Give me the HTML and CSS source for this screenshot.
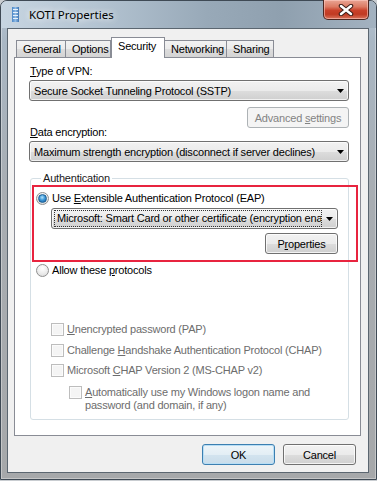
FILE: index.html
```html
<!DOCTYPE html>
<html>
<head>
<meta charset="utf-8">
<link rel="stylesheet" href="styles.css">
</head>
<body>
<div class="window">
  <div class="titlebar">
    <svg class="appicon" width="7" height="15" viewBox="0 0 7 15">
      <defs>
        <linearGradient id="ig" x1="0" y1="0" x2="1" y2="0">
          <stop offset="0" stop-color="#4b86c6"/>
          <stop offset="0.5" stop-color="#8fbbe6"/>
          <stop offset="1" stop-color="#3c72b0"/>
        </linearGradient>
      </defs>
      <rect x="0" y="0" width="7" height="15" fill="url(#ig)"/>
      <rect x="1" y="2" width="5" height="1" fill="#e6f0fa"/>
      <rect x="1" y="5" width="5" height="1" fill="#e6f0fa"/>
      <rect x="1" y="8" width="5" height="1" fill="#e6f0fa"/>
      <rect x="1" y="11" width="5" height="1" fill="#e6f0fa"/>
    </svg>
    <span class="title">KOTI Properties</span>
    <div class="close">
      <svg width="16" height="12" viewBox="0 0 16 12">
        <path d="M3 2 L13 10 M13 2 L3 10" stroke="#3b1d18" stroke-width="4.5" stroke-linecap="round"/>
        <path d="M3 2 L13 10 M13 2 L3 10" stroke="#ffffff" stroke-width="2.5" stroke-linecap="round"/>
      </svg>
    </div>
  </div>
  <div class="client">
    <div class="tabs">
      <div class="tab t-general">General</div>
      <div class="tab t-options">Options</div>
      <div class="tab active t-security">Security</div>
      <div class="tab t-networking">Networking</div>
      <div class="tab t-sharing">Sharing</div>
    </div>
    <div class="panel">
      <div class="label"><u>T</u>ype of VPN:</div>
      <div class="combo first">
        <span class="ctext">Secure Socket Tunneling Protocol (SSTP)</span>
        <svg class="arrow" width="7" height="4" viewBox="0 0 7 4"><polygon points="0,0 7,0 3.5,4" fill="#000"/></svg>
      </div>
      <div class="row-adv">
        <div class="label enc"><u>D</u>ata encryption:</div>
        <div class="button disabled adv"><span>Advanced <u>s</u>ettings</span></div>
      </div>
      <div class="combo second">
        <span class="ctext">Maximum strength encryption (disconnect if server declines)</span>
        <svg class="arrow" width="7" height="4" viewBox="0 0 7 4"><polygon points="0,0 7,0 3.5,4" fill="#000"/></svg>
      </div>
      <fieldset class="group">
        <legend>Authentication</legend>
        <div class="eap">
          <div class="optrow">
            <span class="radio on"></span>
            <span>Use <u>E</u>xtensible Authentication Protocol (EAP)</span>
          </div>
          <div class="combo focus">
            <span class="focusrect">Microsoft: Smart Card or other certificate (encryption ena</span>
            <svg class="arrow" width="7" height="4" viewBox="0 0 7 4"><polygon points="0,0 7,0 3.5,4" fill="#000"/></svg>
          </div>
          <div class="button props"><span>P<u>r</u>operties</span></div>
        </div>
        <div class="optrow allow">
          <span class="radio"></span>
          <span>Allow these <u>p</u>rotocols</span>
        </div>
        <div class="check c-pap"><span class="box"></span><span><u>U</u>nencrypted password (PAP)</span></div>
        <div class="check c-chap">
          <span class="box"></span><span>Challenge <u>H</u>andshake Authentication Protocol (CHAP)</span>
        </div>
        <div class="check c-ms"><span class="box"></span><span>Microsoft <u>C</u>HAP Version 2 (MS-CHAP v2)</span></div>
        <div class="check c-auto">
          <span class="box"></span>
          <span><u>A</u>utomatically use my Windows logon name and<br>password (and domain, if any)</span>
        </div>
      </fieldset>
    </div>
    <div class="footer">
      <div class="button default"><span>OK</span></div>
      <div class="button"><span>Cancel</span></div>
    </div>
  </div>
</div>
</body>
</html>
```
FILE: styles.css
```css
* { box-sizing: border-box; }
html, body { margin: 0; padding: 0; }
body {
  width: 377px;
  height: 481px;
  overflow: hidden;
  background: #c9cdd1;
  font-family: "Liberation Sans", Arial, sans-serif;
  font-size: 11px;
  letter-spacing: -0.2px;
  color: #000;
}
u { text-decoration: underline; text-underline-offset: 1px; }

.window {
  width: 377px;
  height: 480px;
  border: 1px solid #3f4a55;
  border-radius: 7px 7px 0 0;
  background: linear-gradient(180deg, #b6c5d3 0px, #a9b7c4 40px, #a8adb2 200px, #a6a8aa 480px);
  display: flex;
  flex-direction: column;
  box-shadow: inset 0 0 0 1px rgba(255,255,255,0.35);
}

.titlebar {
  height: 27px;
  display: flex;
  align-items: center;
  background: linear-gradient(90deg, #c7d5e1 0%, #b4c4d2 25%, #98a9b8 55%, #8fa0af 75%, #a3b2c0 100%);
  border-radius: 6px 6px 0 0;
}
.appicon { margin-left: 11px; flex: none; }
.title {
  margin-left: 10px;
  font-family: "Noto Sans", "Open Sans", sans-serif;
  font-size: 11.5px;
  letter-spacing: 0;
  color: #000;
  text-shadow: 0 0 6px rgba(255,255,255,0.9), 0 0 10px rgba(255,255,255,0.6);
}
.close {
  margin-left: auto;
  margin-right: 7px;
  align-self: flex-start;
  margin-top: -1px;
  width: 46px;
  height: 20px;
  border: 1px solid #4d2620;
  border-top: none;
  border-radius: 0 0 5px 5px;
  background: linear-gradient(180deg, #e9a595 0%, #dc7b64 35%, #c9412a 55%, #c03a22 75%, #d9745d 100%);
  box-shadow: inset 0 0 0 1px rgba(255,210,200,0.55);
  display: flex;
  align-items: center;
  justify-content: center;
}

.client {
  margin: 0 7px 0 6px;
  height: 445px;
  border: 1px solid #5b6670;
  background: #f0f0f0;
  padding: 8px 6px 0 6px;
  display: flex;
  flex-direction: column;
}

.tabs {
  display: flex;
  height: 20px;
  margin-left: 2px;
  align-items: flex-start;
  position: relative;
  z-index: 1;
}
.tab {
  margin-top: 3px;
  height: 17px;
  border: 1px solid #898c95;
  border-bottom: none;
  background: linear-gradient(180deg, #f2f2f2 0%, #ebebeb 50%, #dddddd 51%, #d4d4d4 100%);
  padding-left: 6px;
  line-height: 16px;
  white-space: nowrap;
  overflow: hidden;
}
.tab + .tab { border-left: none; }
.tab.active {
  margin-top: 0;
  height: 21px;
  background: #fff;
  border-left: 1px solid #898c95;
  line-height: 17px;
  padding-left: 6px;
}
.tab.active + .tab { border-left: none; }
.t-general { width: 50px; }
.t-options { width: 45px; }
.t-security { width: 54px; }
.t-networking { width: 62px; }
.t-sharing { width: 47px; }

.panel {
  width: 347px;
  height: 379px;
  border: 1px solid #898c95;
  background: #fff;
  padding: 7px 11px 0 14px;
  display: flex;
  flex-direction: column;
}

.label { line-height: 13px; height: 13px; padding-left: 1px; white-space: nowrap; }

.combo {
  height: 21px;
  border: 1px solid #707070;
  border-radius: 3px;
  background: linear-gradient(180deg, #f2f2f2 0%, #ebebeb 50%, #dddddd 51%, #cfcfcf 100%);
  box-shadow: inset 0 0 0 1px rgba(255,255,255,0.7);
  display: flex;
  align-items: center;
  padding-left: 4px;
  white-space: nowrap;
}
.combo .arrow { margin-left: auto; margin-right: 4px; flex: none; }
.combo.first { margin-top: 2px; }
.combo.second { margin-top: 2px; }
.ctext { overflow: hidden; }

.row-adv {
  margin-top: 6px;
  height: 32px;
  display: flex;
}
.row-adv .enc { align-self: flex-end; }
.row-adv .adv { margin-left: auto; width: 102px; align-self: flex-start; }

.button {
  height: 21px;
  border: 1px solid #707070;
  border-radius: 3px;
  background: linear-gradient(180deg, #f2f2f2 0%, #ebebeb 50%, #dddddd 51%, #cfcfcf 100%);
  box-shadow: inset 0 0 0 1px rgba(255,255,255,0.75);
  display: flex;
  align-items: center;
  justify-content: center;
  white-space: nowrap;
}
.button.disabled {
  border-color: #adb2b5;
  background: #f4f4f4;
  box-shadow: none;
  color: #838383;
}
.button.default {
  border-color: #3c7fb1;
  background: linear-gradient(180deg, #eef5f9 0%, #e3eef5 50%, #d3e4ef 51%, #c9dcea 100%);
  box-shadow: inset 0 0 0 1px #b8def5;
}

.group {
  margin: 10px 0 0 1px;
  width: 319px;
  border: 1px solid #d5dfe5;
  border-radius: 3px;
  padding: 0 0 7px 5px;
  min-width: 0;
}
.group legend {
  margin-left: 5px;
  padding: 0 2px;
  line-height: 13px;
  color: #1a1a1a;
}

.eap {
  margin-left: -4px;
  width: 326px;
  border: 2px solid #e8243f;
  padding: 5px 18px 6px 2px;
  display: flex;
  flex-direction: column;
}
.optrow {
  display: flex;
  align-items: center;
  height: 13px;
  line-height: 13px;
  white-space: nowrap;
}
.optrow .radio { margin-right: 3px; }
.optrow.allow { margin-top: 2px; }

.radio {
  flex: none;
  width: 13px;
  height: 13px;
  border-radius: 50%;
  border: 1px solid #8f8f8f;
  background: radial-gradient(circle at 50% 30%, #ffffff 0%, #ececec 55%, #d6d6d6 100%);
  display: flex;
  align-items: center;
  justify-content: center;
}
.radio.on::after {
  content: "";
  width: 7px;
  height: 7px;
  border-radius: 50%;
  background: radial-gradient(circle at 45% 35%, #b5e4fb 0%, #3d98d8 45%, #14589a 100%);
  border: 1px solid #1d5f93;
}

.eap .combo.focus {
  margin: 3px 0 0 15px;
  padding-left: 2px;
}
.focusrect {
  flex: 1;
  min-width: 0;
  overflow: hidden;
  white-space: nowrap;
  height: 17px;
  line-height: 15px;
  padding-left: 2px;
  border: 1px dotted #333;
  margin-right: 4px;
}
.eap .combo.focus .arrow { margin-left: 0; margin-right: 4px; }
.props {
  margin-top: 4px;
  align-self: flex-end;
  width: 73px;
}

.check {
  display: flex;
  align-items: flex-start;
  line-height: 13px;
  color: #6d6d6d;
  white-space: nowrap;
  margin-left: 15px;
}
.check .box {
  flex: none;
  width: 13px;
  height: 13px;
  border: 1px solid #bdbdbd;
  background: #f4f4f4;
  box-shadow: inset 0 0 0 1px #fbfbfb;
  margin-right: 3px;
}
.c-pap { margin-top: 46px; }
.c-chap { margin-top: 8px; }
.c-ms { margin-top: 7px; }
.c-auto { margin-top: 9px; margin-left: 33px; }

.footer {
  margin-top: 8px;
  padding-right: 6px;
  display: flex;
  justify-content: flex-end;
  gap: 8px;
}
.footer .button { width: 73px; }
```
